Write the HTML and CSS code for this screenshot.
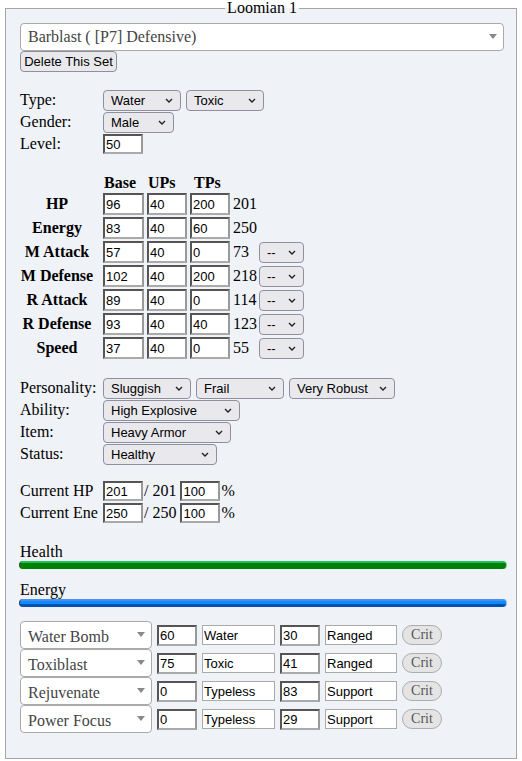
FILE: index.html
```html
<!DOCTYPE html>
<html lang="en">
<head>
<meta charset="utf-8">
<title>Loomian 1</title>
<link rel="stylesheet" href="styles.css">
</head>
<body>
<fieldset class="poke">
  <legend class="poke-title">Loomian 1</legend>

  <div class="s2 set-select"><span class="s2-text">Barblast ( [P7] Defensive)</span><b class="s2-arrow"></b></div>
  <button class="btn del-btn" type="button">Delete This Set</button>

  <div class="info">
    <div class="lbl">Type:</div>
    <div class="ctrls">
      <span class="sel" style="width:78px"><select><option>Water</option></select><svg class="chev" viewBox="0 0 8 5"><path d="M1 1l3 3 3-3"/></svg></span>
      <span class="sel" style="width:78px"><select><option>Toxic</option></select><svg class="chev" viewBox="0 0 8 5"><path d="M1 1l3 3 3-3"/></svg></span>
    </div>
    <div class="lbl">Gender:</div>
    <div class="ctrls">
      <span class="sel" style="width:71px"><select><option>Male</option></select><svg class="chev" viewBox="0 0 8 5"><path d="M1 1l3 3 3-3"/></svg></span>
    </div>
    <div class="lbl">Level:</div>
    <div class="ctrls"><input class="num small" value="50"></div>
  </div>

  <div class="stats">
    <div></div><div class="hd">Base</div><div class="hd">UPs</div><div class="hd hd-tp">TPs</div><div></div><div></div>

    <div class="sl">HP</div><input class="num w41" value="96"><input class="num" value="40"><input class="num" value="200"><div class="tot">201</div><div></div>
    <div class="sl">Energy</div><input class="num w41" value="83"><input class="num" value="40"><input class="num" value="60"><div class="tot">250</div><div></div>
    <div class="sl">M Attack</div><input class="num w41" value="57"><input class="num" value="40"><input class="num" value="0"><div class="tot">73</div><span class="sel boost"><select><option>--</option></select><svg class="chev" viewBox="0 0 8 5"><path d="M1 1l3 3 3-3"/></svg></span>
    <div class="sl">M Defense</div><input class="num w41" value="102"><input class="num" value="40"><input class="num" value="200"><div class="tot">218</div><span class="sel boost"><select><option>--</option></select><svg class="chev" viewBox="0 0 8 5"><path d="M1 1l3 3 3-3"/></svg></span>
    <div class="sl">R Attack</div><input class="num w41" value="89"><input class="num" value="40"><input class="num" value="0"><div class="tot">114</div><span class="sel boost"><select><option>--</option></select><svg class="chev" viewBox="0 0 8 5"><path d="M1 1l3 3 3-3"/></svg></span>
    <div class="sl">R Defense</div><input class="num w41" value="93"><input class="num" value="40"><input class="num" value="40"><div class="tot">123</div><span class="sel boost"><select><option>--</option></select><svg class="chev" viewBox="0 0 8 5"><path d="M1 1l3 3 3-3"/></svg></span>
    <div class="sl">Speed</div><input class="num w41" value="37"><input class="num" value="40"><input class="num" value="0"><div class="tot">55</div><span class="sel boost"><select><option>--</option></select><svg class="chev" viewBox="0 0 8 5"><path d="M1 1l3 3 3-3"/></svg></span>
  </div>

  <div class="info info2">
    <div class="lbl">Personality:</div>
    <div class="ctrls">
      <span class="sel" style="width:88px"><select><option>Sluggish</option></select><svg class="chev" viewBox="0 0 8 5"><path d="M1 1l3 3 3-3"/></svg></span>
      <span class="sel" style="width:88px"><select><option>Frail</option></select><svg class="chev" viewBox="0 0 8 5"><path d="M1 1l3 3 3-3"/></svg></span>
      <span class="sel" style="width:106px"><select><option>Very Robust</option></select><svg class="chev" viewBox="0 0 8 5"><path d="M1 1l3 3 3-3"/></svg></span>
    </div>
    <div class="lbl">Ability:</div>
    <div class="ctrls">
      <span class="sel" style="width:137px"><select><option>High Explosive</option></select><svg class="chev" viewBox="0 0 8 5"><path d="M1 1l3 3 3-3"/></svg></span>
    </div>
    <div class="lbl">Item:</div>
    <div class="ctrls">
      <span class="sel" style="width:128px"><select><option>Heavy Armor</option></select><svg class="chev" viewBox="0 0 8 5"><path d="M1 1l3 3 3-3"/></svg></span>
    </div>
    <div class="lbl">Status:</div>
    <div class="ctrls">
      <span class="sel" style="width:114px"><select><option>Healthy</option></select><svg class="chev" viewBox="0 0 8 5"><path d="M1 1l3 3 3-3"/></svg></span>
    </div>
  </div>

  <div class="info info3">
    <div class="lbl">Current HP</div>
    <div class="ctrls cur"><input class="num small" value="201"><span class="of">/ 201</span><input class="num small" value="100"><span class="pct">%</span></div>
    <div class="lbl">Current Ene</div>
    <div class="ctrls cur"><input class="num small" value="250"><span class="of">/ 250</span><input class="num small" value="100"><span class="pct">%</span></div>
  </div>

  <div class="meter-label">Health</div>
  <div class="bar bar-hp"></div>
  <div class="meter-label meter-en">Energy</div>
  <div class="bar bar-en"></div>

  <div class="moves">
    <div class="move">
      <div class="s2 move-sel"><span class="s2-text">Water Bomb</span><b class="s2-arrow"></b></div>
      <input class="num mv" value="60"><input class="txt mt" value="Water"><input class="num mv" value="30"><input class="txt mc" value="Ranged"><button class="crit" type="button">Crit</button>
    </div>
    <div class="move">
      <div class="s2 move-sel"><span class="s2-text">Toxiblast</span><b class="s2-arrow"></b></div>
      <input class="num mv" value="75"><input class="txt mt" value="Toxic"><input class="num mv" value="41"><input class="txt mc" value="Ranged"><button class="crit" type="button">Crit</button>
    </div>
    <div class="move">
      <div class="s2 move-sel"><span class="s2-text">Rejuvenate</span><b class="s2-arrow"></b></div>
      <input class="num mv" value="0"><input class="txt mt" value="Typeless"><input class="num mv" value="83"><input class="txt mc" value="Support"><button class="crit" type="button">Crit</button>
    </div>
    <div class="move">
      <div class="s2 move-sel"><span class="s2-text">Power Focus</span><b class="s2-arrow"></b></div>
      <input class="num mv" value="0"><input class="txt mt" value="Typeless"><input class="num mv" value="29"><input class="txt mc" value="Support"><button class="crit" type="button">Crit</button>
    </div>
  </div>
</fieldset>
</body>
</html>
```

FILE: styles.css
```css
* { box-sizing: border-box; }

body {
  margin: 0;
  background: #ffffff;
  font-family: "Liberation Serif", "Times New Roman", serif;
  font-size: 16px;
  color: #000;
}

.poke {
  margin: 0 5px;
  width: 512px;
  min-width: 0;
  padding: 7px 12px 25px 14px;
  border: 1px solid #a5a5a5;
  background: #eff2f7;
}

.poke-title {
  margin: 0 auto;
  padding: 0 2px;
  font-size: 16px;
  line-height: 16px;
}

/* select2-like */
.s2 {
  position: relative;
  display: flex;
  align-items: center;
  background: #fff;
  border: 1px solid #aaa;
  border-radius: 4px;
  color: #444;
  font-size: 16px;
  padding-left: 7px;
}
.set-select { height: 28px; }
.s2-arrow {
  position: absolute;
  right: 6px;
  top: 50%;
  margin-top: -3px;
  width: 0;
  height: 0;
  border-style: solid;
  border-width: 5px 4px 0 4px;
  border-color: #888 transparent transparent transparent;
}

.btn {
  display: block;
  width: 97px;
  height: 21px;
  padding: 0;
  font-family: "Liberation Sans", Arial, sans-serif;
  font-size: 13px;
  color: #000;
  background: #e9e9ed;
  border: 1px solid #8f8f9d;
  border-radius: 4px;
}

/* label/control grid */
.info {
  display: grid;
  grid-template-columns: 83px auto;
  grid-auto-rows: 22px;
  align-items: center;
  margin-top: 17px;
}
.lbl { line-height: 18px; }
.ctrls { display: flex; gap: 5px; align-items: center; }

.sel {
  position: relative;
  display: inline-block;
  height: 21px;
}
.sel select {
  -webkit-appearance: none;
  appearance: none;
  width: 100%;
  height: 100%;
  margin: 0;
  padding: 0 0 0 7px;
  background: #e9e9ed;
  border: 1px solid #8f8f9d;
  border-radius: 4px;
  font-family: "Liberation Sans", Arial, sans-serif;
  font-size: 13px;
  color: #000;
}
.chev {
  position: absolute;
  right: 8px;
  top: 8px;
  width: 8px;
  height: 5px;
  fill: none;
  stroke: #222;
  stroke-width: 1.4;
  pointer-events: none;
}

.num {
  width: 40px;
  height: 22px;
  margin: 0;
  padding: 0 1px;
  background: #fff;
  border-style: solid;
  border-width: 2px;
  border-color: #555 #999 #aaa #555;
  font-family: "Liberation Sans", Arial, sans-serif;
  font-size: 13px;
  color: #000;
}
.num.small { height: 20px; }
.num.w41 { width: 41px; }

/* stats */
.stats {
  display: grid;
  grid-template-columns: 83px 44px 43px 43px 26px 45px;
  grid-template-rows: 18px;
  grid-auto-rows: 24px;
  align-items: center;
  margin-top: 19px;
}
.hd { font-weight: bold; padding-left: 1px; line-height: 18px; }
.hd-tp { padding-left: 4px; }
.sl {
  font-weight: bold;
  text-align: center;
  padding-right: 9px;
  white-space: nowrap;
}
.tot { white-space: nowrap; }
.boost { width: 45px; }

.info2 { margin-top: 17px; }
.info3 { margin-top: 15px; }

.cur { gap: 0; }
.of { margin: 0 4px 0 1px; }
.pct { margin-left: 1px; }

.meter-label { margin-top: 19px; line-height: 18px; }
.meter-en { margin-top: 12px; }
.bar {
  height: 8px;
  margin: 0 -3px 0 -1px;
  border-radius: 4px;
}
.bar-hp {
  background: linear-gradient(#1cc25a 0 2px, #008000 2px);
  border-left: 1px solid #2a4a2a;
  border-right: 1px solid #7fcf8f;
}
.bar-en {
  background: linear-gradient(#4f8fea 0 2px, #0a8cff 2px 5px, #0050b4 5px);
  border-left: 1px solid #1c3a6a;
  border-right: 1px solid #7fb7ff;
}

.moves { margin-top: 14px; }
.move {
  display: flex;
  align-items: center;
  gap: 5px;
  height: 28px;
}
.move-sel { width: 132px; height: 28px; padding-top: 3px; }
.mv { height: 21px; }
.txt {
  height: 20px;
  margin: 0;
  padding: 0 1px;
  background: #fff;
  border: 1px solid #aaa;
  font-family: "Liberation Sans", Arial, sans-serif;
  font-size: 13px;
  color: #000;
}
.mt { width: 73px; }
.mc { width: 72px; }
.crit {
  width: 40px;
  height: 20px;
  padding: 0;
  background: #e4e4e4;
  border: 1px solid #acacac;
  border-radius: 10px;
  font-family: "Liberation Serif", "Times New Roman", serif;
  font-size: 14px;
  color: #555;
}
```
